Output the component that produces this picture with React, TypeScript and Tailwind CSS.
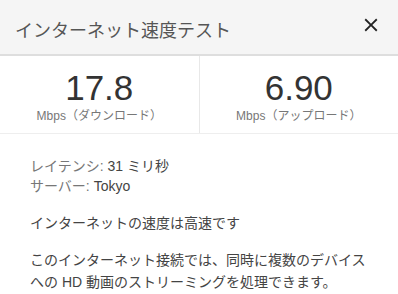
const font = {
  fontFamily: '"Liberation Sans", Arial, "Noto Sans CJK JP", sans-serif',
};

function CloseIcon() {
  return (
    <svg width="22" height="22" viewBox="0 0 24 24" className="fill-[#222]">
      <path d="M19 6.41L17.59 5 12 10.59 6.41 5 5 6.41 10.59 12 5 17.59 6.41 19 12 13.41 17.59 19 19 17.59 13.41 12z" />
    </svg>
  );
}

function Stat({ value, label }: { value: string; label: string }) {
  return (
    <div className="flex-1 flex flex-col items-center pt-[12px]">
      <div className="text-[35px] leading-[40px] text-[#333]">{value}</div>
      <div className="text-[12px] leading-[16px] text-[#777]">{label}</div>
    </div>
  );
}

export default function App() {
  return (
    <div className="w-[398px] h-[294px] bg-white overflow-hidden" style={font}>
      <div className="h-[56px] bg-[#f5f5f5] border-b-2 border-[#dedede] flex items-center justify-between pl-[15px] pr-[15px]">
        <div className="text-[18px] text-[#555] pt-[8px]">インターネット速度テスト</div>
        <button className="w-[24px] h-[24px] flex items-center justify-center -mt-[4px]">
          <CloseIcon />
        </button>
      </div>
      <div className="flex h-[78px] border-b border-[#eee]">
        <Stat value="17.8" label="Mbps（ダウンロード）" />
        <div className="w-px bg-[#e8e8e8]" />
        <Stat value="6.90" label="Mbps（アップロード）" />
      </div>
      <div className="pl-[30px] pr-[20px] pt-[22px] text-[14px] text-[#444]">
        <div className="leading-[20px]">
          <div>
            <span className="text-[#777]">レイテンシ: </span>31 ミリ秒
          </div>
          <div>
            <span className="text-[#777]">サーバー: </span>Tokyo
          </div>
        </div>
        <div className="mt-[16px] leading-[22px]">インターネットの速度は高速です</div>
        <div className="mt-[15px] leading-[22px]">
          このインターネット接続では、同時に複数のデバイスへの HD 動画のストリーミングを処理できます。
        </div>
      </div>
    </div>
  );
}
